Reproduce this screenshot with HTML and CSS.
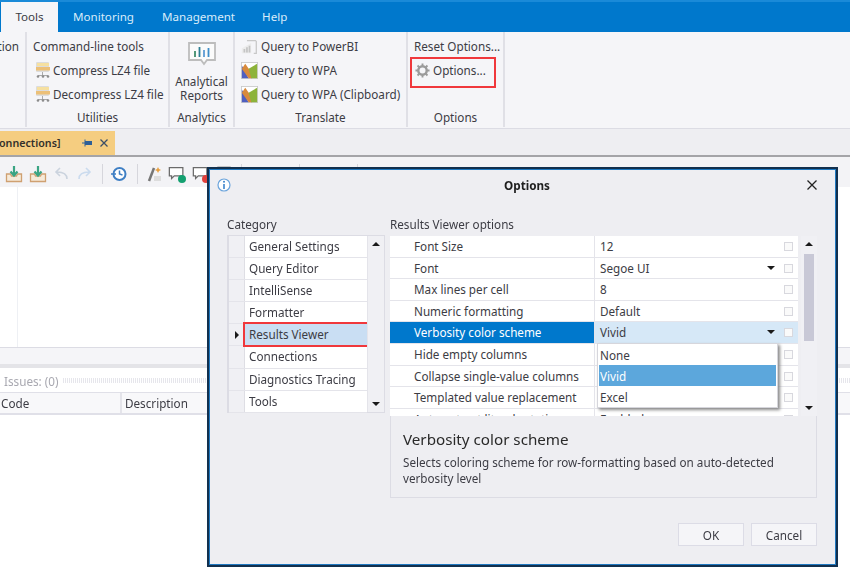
FILE: index.html
```html
<!DOCTYPE HTML>
<html>
	<head>
		<title>Options</title>
		<link rel="stylesheet" href="styles.css">
	</head>
	<body>
		<svg class="defs" width="0" height="0">
			<symbol id="lz4" viewBox="0 0 16 18">
				<rect x="1" y="1" width="13" height="10" rx="1" fill="#dcdcdc"/>
				<rect x="2" y="2" width="12" height="3" fill="#f6e0a0"/>
				<rect x="1" y="6" width="14" height="3.500" fill="#ecc078"/>
				<path d="M7.500 11v3M3 14.500h10" stroke="#aaa" fill="none"/>
				<circle cx="3" cy="15.500" r="1.300" fill="#8c8c8c"/>
				<circle cx="8" cy="15.500" r="1.300" fill="#8c8c8c"/>
				<circle cx="13" cy="15.500" r="1.300" fill="#8c8c8c"/>
			</symbol>
			<symbol id="wpa" viewBox="0 0 20 20">
				<rect width="20" height="20" fill="#c8c8c8"/>
				<rect x="1" y="1" width="18" height="18" fill="#fff"/>
				<path d="M1 19V4l8 15z" fill="#4f5fc0"/>
				<path d="M1 8L5 2l7 10 1 7H9z" fill="#d88a3c"/>
				<path d="M9 8l10-6v17H12z" fill="#8db33a"/>
			</symbol>
			<symbol id="tray" viewBox="0 0 18 18">
				<path d="M1.500 9h4l1 2h5l1-2h4v7.500h-15z" fill="#f6ead9" stroke="#cfa071" stroke-width="1.300"/>
				<path d="M9 1v9M5.500 6.500L9 10.500l3.500-4" fill="none" stroke="#3aa483" stroke-width="2.200"/>
			</symbol>
			<symbol id="bubble" viewBox="0 0 20 18">
				<path d="M1.500 2h15v9H7l-3 3v-3H1.500z" fill="#fff" stroke="#6b6b6b" stroke-width="1.400"/>
			</symbol>
		</svg>

		<div class="tabs">
			<div class="tab active">Tools</div>
			<div class="tab monitoring">Monitoring</div>
			<div class="tab management">Management</div>
			<div class="tab help">Help</div>
		</div>

		<div class="ribbon">
			<div class="group g-cut">
				<div class="items"><div class="item">tion</div></div>
			</div>
			<div class="group g-util">
				<div class="items">
					<div class="item">Command-line tools</div>
					<div class="item"><svg class="ico16"><use href="#lz4"/></svg>Compress LZ4 file</div>
					<div class="item"><svg class="ico16"><use href="#lz4"/></svg>Decompress LZ4 file</div>
				</div>
				<div class="group-name">Utilities</div>
			</div>
			<div class="group g-analytics">
				<div class="items big">
					<svg class="report-ico" viewBox="0 0 30 28">
						<path d="M2 2h26v17H20l-3 4-3-4H2z" fill="#fbfbfb" stroke="#bdbdbd" stroke-width="1.800"/>
						<path d="M8 10v6" stroke="#3f8c6a" stroke-width="1.800"/>
						<path d="M12.500 6v10" stroke="#2d7f93" stroke-width="1.800"/>
						<path d="M17 9v7" stroke="#5d9bd3" stroke-width="1.800"/>
						<path d="M21.500 7v9" stroke="#3f8fc9" stroke-width="1.800"/>
					</svg>
					<div class="big-label">Analytical<br>Reports</div>
				</div>
				<div class="group-name">Analytics</div>
			</div>
			<div class="group g-translate">
				<div class="items">
					<div class="item">
						<svg class="ico20" viewBox="0 0 20 20">
							<path d="M1 12l11-6v12H1z" fill="#ececec"/>
							<path d="M4 17v-4M7 17v-6M10 17V9" stroke="#c4c4c4" stroke-width="2"/>
							<path d="M7 3h10l1 1v14h-3" fill="none" stroke="#c8c8c8" stroke-width="1.500"/>
						</svg>Query to PowerBI
					</div>
					<div class="item"><svg class="ico20"><use href="#wpa"/></svg>Query to WPA</div>
					<div class="item"><svg class="ico20"><use href="#wpa"/></svg>Query to WPA (Clipboard)</div>
				</div>
				<div class="group-name">Translate</div>
			</div>
			<div class="group g-options">
				<div class="items">
					<div class="item">Reset Options...</div>
					<div class="item">
						<svg class="ico16 gear" viewBox="0 0 16 16">
							<circle cx="8" cy="8" r="4.500" fill="none" stroke="#9b9b9b" stroke-width="2.600"/>
							<path d="M8 .5v3M8 12.500v3M.5 8h3M12.500 8h3M2.700 2.700l2.100 2.100M11.200 11.200l2.100 2.100M2.700 13.300l2.100-2.100M11.200 4.800l2.100-2.100" stroke="#9b9b9b" stroke-width="2"/>
						</svg>Options...
					</div>
				</div>
				<div class="group-name">Options</div>
				<div class="callout"></div>
			</div>
		</div>

		<div class="doc-strip">
			<div class="doc-tab">
				<span class="doc-title">onnections]</span>
				<svg class="doc-pin" viewBox="0 0 10 10"><path d="M0 5h3M3 1.500v7" stroke="#2e5f96" fill="none"/><rect x="3" y="3" width="7" height="4" fill="#2e5f96"/></svg>
				<svg class="doc-x" viewBox="0 0 8 8"><path d="M.5.500l7 7M7.500.500l-7 7" stroke="#3d4e66" stroke-width="1.300"/></svg>
			</div>
		</div>

		<div class="toolbar">
			<svg class="tb"><use href="#tray"/></svg>
			<svg class="tb"><use href="#tray"/></svg>
			<svg class="tb" viewBox="0 0 18 18"><path d="M15 14c0-5-3-7-10-7M8 3L4 7l4 4" fill="none" stroke="#cbd3de" stroke-width="1.600"/></svg>
			<svg class="tb" viewBox="0 0 18 18"><path d="M3 14c0-5 3-7 10-7M10 3l4 4-4 4" fill="none" stroke="#cbdbee" stroke-width="1.600"/></svg>
			<div class="tb-sep"></div>
			<svg class="tb" viewBox="0 0 18 18"><circle cx="9.500" cy="9" r="6" fill="#fff" stroke="#3f7fc4" stroke-width="2"/><path d="M9.500 5.500V9l3 1M1 9h5" fill="none" stroke="#3f7fc4" stroke-width="1.500"/></svg>
			<div class="tb-sep"></div>
			<svg class="tb" viewBox="0 0 18 18"><path d="M4 16L9 3" stroke="#777" stroke-width="2.500"/><path d="M12 4l1-2 1 2 2 1-2 1-1 2-1-2-2-1z" fill="#e8a040"/><rect x="9" y="11" width="7" height="5" fill="#ddd"/></svg>
			<div class="tb-bubble">
				<svg class="tb"><use href="#bubble"/></svg>
				<span class="dot green"></span>
			</div>
			<div class="tb-bubble">
				<svg class="tb"><use href="#bubble"/></svg>
				<span class="dot red"></span>
			</div>
			<svg class="tb" viewBox="0 0 18 18"><rect x="3" y="2" width="12" height="14" fill="#fff" stroke="#b0b0b0" stroke-width="1.400"/></svg>
			<div class="tb-sep far"></div>
			<div class="tb-sep next"></div>
			<div class="tb-sep next"></div>
		</div>

		<div class="editor"></div>

		<div class="splitter"></div>
		<div class="issues">
			<span class="issues-title">Issues: (0)</span>
			<span class="dither"></span>
		</div>
		<div class="issues-head">
			<div class="col-code">Code</div>
			<div class="col-desc">Description</div>
		</div>
		<div class="issues-body"></div>

		<!-- dialog sits over the main window -->
		<div class="dialog">
			<div class="dialog-title">
				<svg class="info" viewBox="0 0 14 14">
					<circle cx="7" cy="7" r="6" fill="#fff" stroke="#6ba4dc" stroke-width="1.200"/>
					<path d="M7 6v5" stroke="#3c84cc" stroke-width="1.600"/>
					<circle cx="7" cy="3.800" r="1" fill="#3c84cc"/>
				</svg>
				<div class="dialog-name">Options</div>
				<svg class="close" viewBox="0 0 10 10"><path d="M.5.500l9 9M9.500.500l-9 9" stroke="#222" stroke-width="1.300"/></svg>
			</div>

			<div class="dialog-main">
				<div class="category">
					<div class="pane-label">Category</div>
					<div class="cat-box">
						<div class="cat-rows">
							<div class="cat-row"><span class="rowhead"></span><span class="cell">General Settings</span></div>
							<div class="cat-row"><span class="rowhead"></span><span class="cell">Query Editor</span></div>
							<div class="cat-row"><span class="rowhead"></span><span class="cell">IntelliSense</span></div>
							<div class="cat-row"><span class="rowhead"></span><span class="cell">Formatter</span></div>
							<div class="cat-row current"><span class="rowhead"><span class="arrow"></span></span><span class="cell">Results Viewer</span></div>
							<div class="cat-row"><span class="rowhead"></span><span class="cell">Connections</span></div>
							<div class="cat-row"><span class="rowhead"></span><span class="cell">Diagnostics Tracing</span></div>
							<div class="cat-row"><span class="rowhead"></span><span class="cell">Tools</span></div>
						</div>
						<div class="scroll">
							<span class="up"></span>
							<span class="down"></span>
						</div>
					</div>
				</div>

				<div class="options">
					<div class="pane-label">Results Viewer options</div>
					<div class="prop-box">
						<div class="prop-rows">
							<div class="prop-row"><span class="name">Font Size</span><span class="value">12<i class="check"></i></span></div>
							<div class="prop-row"><span class="name">Font</span><span class="value">Segoe UI<b class="caret"></b><i class="check"></i></span></div>
							<div class="prop-row"><span class="name">Max lines per cell</span><span class="value">8<i class="check"></i></span></div>
							<div class="prop-row"><span class="name">Numeric formatting</span><span class="value">Default<i class="check"></i></span></div>
							<div class="prop-row selected"><span class="name">Verbosity color scheme</span><span class="value">Vivid<b class="caret"></b><i class="check"></i></span></div>
							<div class="prop-row"><span class="name">Hide empty columns</span><span class="value"><i class="check"></i></span></div>
							<div class="prop-row"><span class="name">Collapse single-value columns</span><span class="value"><i class="check"></i></span></div>
							<div class="prop-row"><span class="name">Templated value replacement</span><span class="value"><i class="check"></i></span></div>
							<div class="prop-row"><span class="name">Auto-extract literal rotation</span><span class="value">Enabled<i class="check"></i></span></div>
						</div>
						<div class="scroll prop-scroll">
							<span class="up"></span>
							<span class="thumb"></span>
							<span class="down"></span>
						</div>
						<div class="dropdown">
							<div class="opt">None</div>
							<div class="opt on">Vivid</div>
							<div class="opt">Excel</div>
						</div>
					</div>
					<div class="help-box">
						<div class="help-title">Verbosity color scheme</div>
						<div class="help-text">Selects coloring scheme for row-formatting based on auto-detected verbosity level</div>
					</div>
				</div>
			</div>

			<div class="dialog-buttons">
				<button>OK</button>
				<button>Cancel</button>
			</div>
		</div>
	</body>
</html>
```

FILE: styles.css
```css
html, body {
	margin: 0;
	height: 100%;
}
body {
	width: 850px;
	height: 579px;
	overflow: hidden;
	position: relative;
	display: flex;
	flex-direction: column;
	background-color: white;
	font-family: "Noto Sans", "Open Sans", sans-serif;
	font-size: 11.7px;
	color: #3c3c44;
	filter: blur(0.4px);
}
.defs {
	position: absolute;
}

/* top tabs */
.tabs {
	display: flex;
	height: 32px;
	flex: none;
	box-sizing: border-box;
	border-top: 2px solid #1a8ad8;
	background-color: #0078cc;
	color: #d8ecfa;
	font-size: 11.6px;
}
.tab {
	line-height: 30px;
}
.tab.active {
	width: 57px;
	margin-left: 1px;
	text-align: center;
	background-color: #f5f5f8;
	color: #3c3c44;
}
.monitoring {
	margin-left: 15px;
}
.management {
	margin-left: 28px;
}
.help {
	margin-left: 27px;
}

/* ribbon */
.ribbon {
	display: flex;
	height: 97px;
	flex: none;
	box-sizing: border-box;
	padding-bottom: 1px;
	background-color: #f5f5f8;
	border-bottom: 1px solid #dcdce4;
}
.group {
	position: relative;
	display: flex;
	flex-direction: column;
	flex: none;
	box-sizing: border-box;
	border-right: 2px solid #e0e0e6;
}
.items {
	flex: 1;
	padding-top: 2px;
}
.item {
	display: flex;
	align-items: center;
	height: 24px;
	white-space: nowrap;
}
.group-name {
	height: 19px;
	line-height: 19px;
	text-align: center;
}
.g-cut {
	width: 27px;
	overflow: hidden;
}
.g-cut .items {
	display: flex;
	justify-content: flex-end;
	padding-right: 6px;
}
.g-util {
	width: 143px;
}
.g-util .items {
	padding-left: 6px;
}
.g-analytics {
	width: 65px;
}
.big {
	display: flex;
	flex-direction: column;
	align-items: center;
	padding-top: 9px;
}
.big-label {
	margin-top: 5px;
	line-height: 14px;
	text-align: center;
}
.report-ico {
	width: 30px;
	height: 28px;
}
.g-translate {
	width: 173px;
}
.g-translate .items {
	padding-left: 6px;
}
.g-options {
	width: 97px;
}
.g-options .items {
	padding-left: 6px;
}
.ico16 {
	width: 16px;
	height: 18px;
	margin-right: 2px;
	margin-left: 2px;
	flex: none;
}
.gear {
	width: 15px;
	height: 15px;
	margin-right: 3px;
	margin-left: 1px;
}
.ico20 {
	width: 17px;
	height: 17px;
	margin-right: 3px;
	flex: none;
}
.callout {
	position: absolute;
	left: 2px;
	top: 25px;
	width: 82px;
	height: 27px;
	border: 2px solid #f0383c;
	box-sizing: content-box;
}

/* document tabs */
.doc-strip {
	height: 28px;
	flex: none;
	box-sizing: border-box;
	padding-top: 2px;
	background-color: #eeeef2;
	border-bottom: 2px solid #a4a4a8;
}
.doc-tab {
	display: flex;
	align-items: center;
	width: 115px;
	height: 24px;
	background-color: #f5cd80;
	color: #33302a;
	font-weight: 600;
	font-size: 10.7px;
}
.doc-title {
	margin-left: -1px;
	width: 83px;
}
.doc-pin {
	width: 10px;
	height: 10px;
}
.doc-x {
	width: 8px;
	height: 8px;
	margin-left: 8px;
}

/* toolbar */
.toolbar {
	display: flex;
	align-items: center;
	height: 30px;
	flex: none;
	box-sizing: border-box;
	padding-left: 5px;
	padding-top: 3px;
	background-color: #f3f3f6;
}
.tb {
	width: 18px;
	height: 18px;
	margin-right: 5.5px;
	flex: none;
}
.tb-sep {
	width: 1px;
	height: 20px;
	margin: 0 7px 0 3px;
	background-color: #d6d6dc;
}
.tb-sep.far {
	margin-left: 2px;
	margin-right: 0;
}
.tb-sep.next {
	margin-left: 57px;
	margin-right: 0;
}
.tb-bubble {
	position: relative;
	display: flex;
}
.dot {
	position: absolute;
	left: 10px;
	top: 10px;
	width: 8px;
	height: 8px;
	border-radius: 50%;
}
.dot.green {
	background-color: #14a070;
}
.dot.red {
	background-color: #e0403c;
}

/* editor and issues */
.editor {
	height: 160px;
	flex: none;
	margin-left: 17px;
	border-left: 1px solid #eef0f4;
}
.splitter {
	height: 21px;
	flex: none;
	box-sizing: border-box;
	background-color: #f5f5f8;
	border-top: 1px solid #dcdce4;
	border-bottom: 4px solid #e4e4e8;
}
.issues {
	display: flex;
	align-items: center;
	height: 24px;
	flex: none;
	padding-left: 4px;
	padding-top: 1px;
	box-sizing: border-box;
	color: #a8a8b0;
}
.dither {
	flex: 1;
	height: 5px;
	margin-left: 5px;
	background-image: repeating-linear-gradient(90deg, #e6e6ec 0 1px, white 1px 2px);
}
.issues-head {
	display: flex;
	height: 23px;
	flex: none;
	box-sizing: border-box;
	line-height: 21px;
	border-top: 1px solid #e0e0e8;
	border-bottom: 2px solid #e0e0e8;
	background-color: #f8f8fa;
}
.col-code {
	width: 119px;
	padding-left: 1px;
	border-right: 2px solid #e4e4ea;
}
.col-desc {
	padding-left: 3px;
}
.issues-body {
	flex: 1;
}

/* options dialog */
.dialog {
	position: absolute;
	left: 207px;
	top: 167px;
	width: 631px;
	height: 400px;
	box-sizing: border-box;
	display: flex;
	flex-direction: column;
	background-color: #eeeef2;
	border: 2px solid #12304e;
	outline: 1px solid #1f78c0;
	outline-offset: -3px;
}
.dialog-title {
	display: flex;
	align-items: center;
	height: 32px;
	flex: none;
	box-sizing: border-box;
	padding-left: 8px;
	padding-right: 19px;
}
.info {
	width: 14px;
	height: 14px;
}
.dialog-name {
	flex: 1;
	margin-left: 16px;
	font-weight: 700;
	text-align: center;
	color: #1e1e1e;
}
.close {
	width: 10px;
	height: 10px;
}
.dialog-main {
	display: flex;
	flex: none;
	height: 282px;
	margin-top: 15px;
	padding-left: 18px;
	gap: 5px;
}
.category {
	width: 158px;
	flex: none;
}
.pane-label {
	height: 19px;
	line-height: 17px;
}
.cat-box {
	display: flex;
	height: 178px;
	box-sizing: border-box;
	border: 1px solid #dcdce4;
	border-left-width: 2px;
	background-color: #e4e4ea;
}
.cat-rows {
	flex: 1;
}
.cat-row {
	display: flex;
	height: 22.100px;
	box-sizing: border-box;
	border-bottom: 1px solid #e4e4ea;
}
.rowhead {
	display: flex;
	align-items: center;
	justify-content: center;
	width: 15px;
	flex: none;
	background-color: #f0f0f4;
	border-right: 1px solid #dedee4;
}
.cell {
	flex: 1;
	padding-left: 4px;
	background-color: white;
	line-height: 21px;
}
.current .cell {
	position: relative;
	background-color: #c9def3;
	outline: 2px solid #f0383c;
}
.arrow {
	width: 0;
	height: 0;
	border-left: 4px solid #1a1a1a;
	border-top: 4px solid transparent;
	border-bottom: 4px solid transparent;
}
.scroll {
	position: relative;
	width: 16px;
	flex: none;
	background-color: #f0f0f4;
	border-left: 1px solid #e4e4ea;
}
.up, .down {
	position: absolute;
	left: 4px;
	width: 0;
	height: 0;
	border-left: 4px solid transparent;
	border-right: 4px solid transparent;
}
.up {
	top: 6px;
	border-bottom: 4px solid #1a1a1a;
}
.down {
	bottom: 6px;
	border-top: 4px solid #1a1a1a;
}
.options {
	width: 427px;
	flex: none;
}
.prop-box {
	position: relative;
	display: flex;
	justify-content: space-between;
	height: 181px;
	box-sizing: border-box;
	padding-top: 1px;
	overflow: hidden;
	background-color: #eeeef2;
}
.prop-rows {
	width: 408px;
	flex: none;
}
.prop-row {
	display: grid;
	grid-template-columns: 204px 1fr;
	column-gap: 1px;
	height: 21.600px;
	box-sizing: border-box;
	padding-bottom: 1px;
	line-height: 20.500px;
	background-color: #e4e4ea;
}
.name {
	padding-left: 24px;
	background-color: white;
}
.value {
	position: relative;
	padding-left: 5px;
	background-color: white;
}
.selected .name {
	background-color: #0078cc;
	color: white;
}
.selected .value {
	background-color: #d6e8f7;
}
.check {
	position: absolute;
	right: 5px;
	top: 6px;
	width: 7px;
	height: 7px;
	border: 1px solid #d8d8de;
	background-color: #fafafa;
}
.caret {
	position: absolute;
	right: 23px;
	top: 8px;
	width: 0;
	height: 0;
	border-left: 4px solid transparent;
	border-right: 4px solid transparent;
	border-top: 4px solid #1a1a1a;
}
.prop-scroll {
	height: 180px;
	border-left: none;
}
.thumb {
	position: absolute;
	left: 3px;
	top: 18px;
	width: 10px;
	height: 87px;
	background-color: #c8c8d6;
}
.dropdown {
	position: absolute;
	left: 207px;
	top: 108px;
	width: 177px;
	height: 63px;
	padding: 0 1px;
	background-color: white;
	border: 1px solid #d6d6dc;
	box-shadow: 2px 2px 3px #8a8a8a;
}
.opt {
	height: 21px;
	line-height: 23px;
	padding-left: 1px;
}
.opt.on {
	background-color: #5ca7dc;
	color: white;
}
.help-box {
	height: 82px;
	box-sizing: border-box;
	padding: 12px 12px 0;
	border: 1px solid #dcdce4;
	border-top: none;
}
.help-title {
	height: 26px;
	font-size: 15.2px;
	line-height: 22px;
	color: #2a2a2a;
}
.help-text {
	line-height: 16px;
	color: #3c3c44;
}
.dialog-buttons {
	display: flex;
	justify-content: flex-end;
	gap: 7px;
	padding-right: 19px;
	margin-top: 25px;
}
button {
	width: 66px;
	height: 23px;
	padding: 0;
	font: inherit;
	color: #3c3c44;
	background-color: #f5f5f8;
	border: 1px solid #dcdce6;
}
```
